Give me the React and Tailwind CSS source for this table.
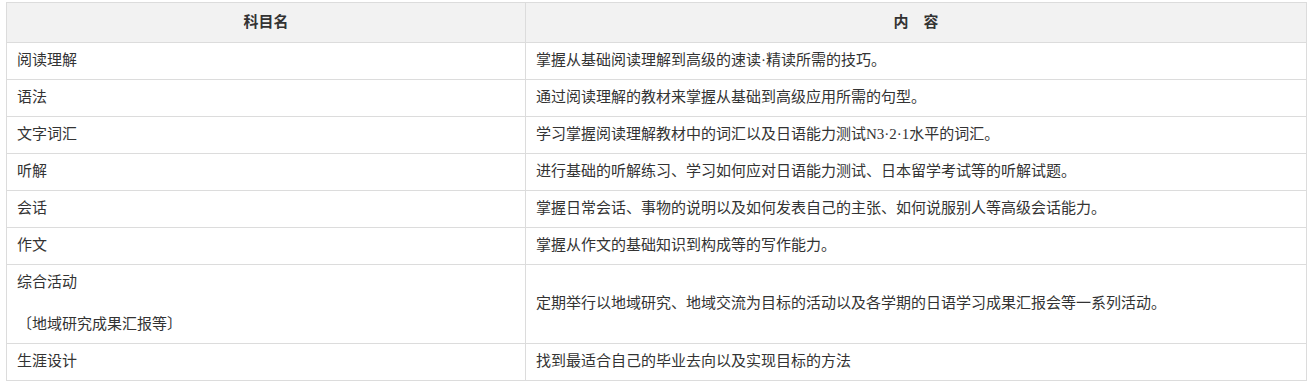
import React from "react";

const rows = [
  ["阅读理解", "掌握从基础阅读理解到高级的速读·精读所需的技巧。"],
  ["语法", "通过阅读理解的教材来掌握从基础到高级应用所需的句型。"],
  ["文字词汇", "学习掌握阅读理解教材中的词汇以及日语能力测试N3·2·1水平的词汇。"],
  ["听解", "进行基础的听解练习、学习如何应对日语能力测试、日本留学考试等的听解试题。"],
  ["会话", "掌握日常会话、事物的说明以及如何发表自己的主张、如何说服别人等高级会话能力。"],
  ["作文", "掌握从作文的基础知识到构成等的写作能力。"],
  [
    <>
      综合活动
      <br />
      <br />
      〔地域研究成果汇报等〕
    </>,
    "定期举行以地域研究、地域交流为目标的活动以及各学期的日语学习成果汇报会等一系列活动。",
  ],
  ["生涯设计", "找到最适合自己的毕业去向以及实现目标的方法"],
];

export default function App() {
  return (
    <div
      className="bg-white pl-[6px] pt-[2px] text-[15px] leading-[21px] text-[#333]"
      style={{ fontFamily: '"Liberation Serif", "Noto Sans CJK SC", sans-serif' }}
    >
      <table className="w-[1300px] table-fixed border-collapse">
        <colgroup>
          <col className="w-[519px]" />
          <col className="w-[781px]" />
        </colgroup>
        <thead>
          <tr className="bg-[#f2f2f2]">
            <th className="border border-[#dcdcdc] py-[9px] px-[10px] text-center font-bold">科目名</th>
            <th className="border border-[#dcdcdc] py-[9px] px-[10px] text-center font-bold">内　容</th>
          </tr>
        </thead>
        <tbody>
          {rows.map((r, i) => (
            <tr key={i}>
              <td className="border border-[#dcdcdc] pt-[7px] pb-[8px] px-[10px] align-middle">{r[0]}</td>
              <td className="border border-[#dcdcdc] pt-[7px] pb-[8px] px-[10px] align-middle">{r[1]}</td>
            </tr>
          ))}
        </tbody>
      </table>
    </div>
  );
}
